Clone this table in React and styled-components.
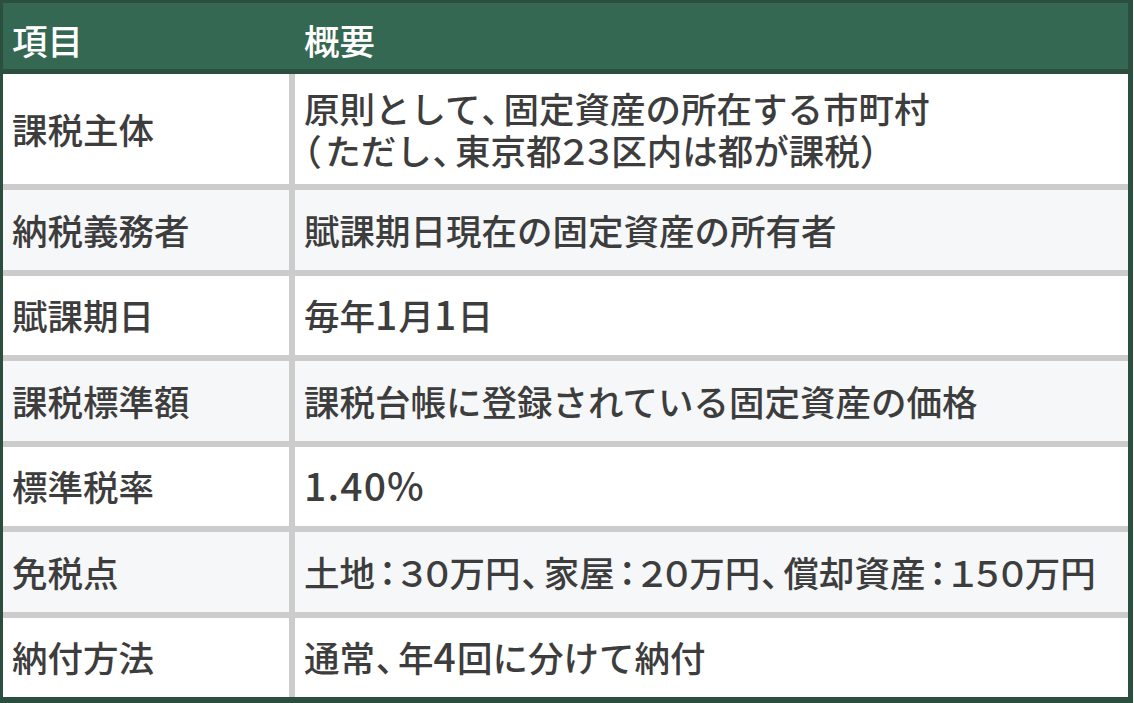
import React from 'react';
import styled, { createGlobalStyle } from 'styled-components';

const GlobalStyle = createGlobalStyle`
  html, body {
    margin: 0;
    padding: 0;
    background: #ffffff;
  }
  body {
    font-family: "Noto Sans CJK JP", "Noto Sans", sans-serif;
  }
`;

const rows = [
  { label: '課税主体', text: ['原則として、固定資産の所在する市町村', '（ただし、東京都２３区内は都が課税）'] },
  { label: '納税義務者', text: ['賦課期日現在の固定資産の所有者'] },
  { label: '賦課期日', text: ['毎年1月1日'] },
  { label: '課税標準額', text: ['課税台帳に登録されている固定資産の価格'] },
  { label: '標準税率', text: ['1.40%'] },
  { label: '免税点', text: ['土地：３０万円、家屋：２０万円、償却資産：１５０万円'] },
  { label: '納付方法', text: ['通常、年4回に分けて納付'] },
];

// the original font sets full-width digits, colons, brackets and 、 narrower than a kanji
// [advance in em, glyph shift in em]
const narrowFor = (ch) => {
  if (/[０-９：]/.test(ch)) return [0.7, -0.15];
  if (ch === '（') return [0.6, -0.5];
  if (ch === '）') return [0.6, 0];
  if (ch === '、') return [0.65, 0.02];
  return null;
};
const LATIN = /[0-9.%]/;

const renderLine = (line) => {
  const parts = [];
  let buf = '';
  let kind = null;
  const flush = () => {
    if (!buf) return;
    if (kind === 'latin') parts.push(<Latin key={parts.length}>{buf}</Latin>);
    else parts.push(buf);
    buf = '';
  };
  for (const ch of line) {
    const narrow = narrowFor(ch);
    if (narrow) {
      flush();
      kind = null;
      parts.push(
        <Narrow key={parts.length} $w={narrow[0]} $shift={narrow[1]}>
          {ch}
        </Narrow>
      );
      continue;
    }
    const k = LATIN.test(ch) ? 'latin' : 'cjk';
    if (k !== kind) {
      flush();
      kind = k;
    }
    buf += ch;
  }
  flush();
  return parts;
};

const App = () => {
  return (
    <>
      <GlobalStyle />
      <Table>
        <HeadRow>
          <HeadCell>項目</HeadCell>
          <HeadCell>概要</HeadCell>
        </HeadRow>
        <Body>
          {rows.map((row, i) => (
            <React.Fragment key={row.label}>
              <Cell striped={i % 2 === 1}>{row.label}</Cell>
              <Cell striped={i % 2 === 1}>
                <div>
                  {row.text.map((line) => (
                    <Line key={line}>{renderLine(line)}</Line>
                  ))}
                </div>
              </Cell>
            </React.Fragment>
          ))}
        </Body>
      </Table>
    </>
  );
};

export default App;

const Table = styled.div`
  width: 1133px;
  height: 703px;
  box-sizing: border-box;
  border-style: solid;
  border-color: #2b4e3f;
  border-width: 3px 5px 6px 3px;
  display: flex;
  flex-direction: column;
  background: #cccccc;
  overflow: hidden;
`;

const HeadRow = styled.div`
  display: grid;
  grid-template-columns: 292px minmax(0, 1fr);
  height: 66px;
  flex-shrink: 0;
  background: #356852;
  border-bottom: 5px solid #2b4e3f;
`;

const HeadCell = styled.div`
  display: flex;
  align-items: center;
  padding: 6px 0 0 9px;
  font-size: 35.5px;
  font-weight: 500;
  color: #ffffff;
`;

const Body = styled.div`
  flex: 1;
  min-height: 0;
  display: grid;
  grid-template-columns: 286px minmax(0, 1fr);
  grid-template-rows: 110px repeat(6, 1fr);
  gap: 6px;
  background: #cccccc;
`;

const Cell = styled.div`
  display: flex;
  align-items: center;
  min-width: 0;
  padding: 0 8px 0 9px;
  background: ${(p) => (p.striped ? '#f6f7f9' : '#ffffff')};
  font-size: 35.5px;
  font-weight: 500;
  color: #3d3d3d;
  line-height: 42px;
  white-space: nowrap;
`;

const Line = styled.div`
  line-height: 42px;
`;

const Narrow = styled.span`
  position: relative;
  left: ${(p) => p.$shift}em;
  letter-spacing: ${(p) => (p.$w - 1).toFixed(2)}em;
`;

const Latin = styled.span`
  font-size: 1.1em;
  letter-spacing: 0.03em;
  line-height: 0;
`;
